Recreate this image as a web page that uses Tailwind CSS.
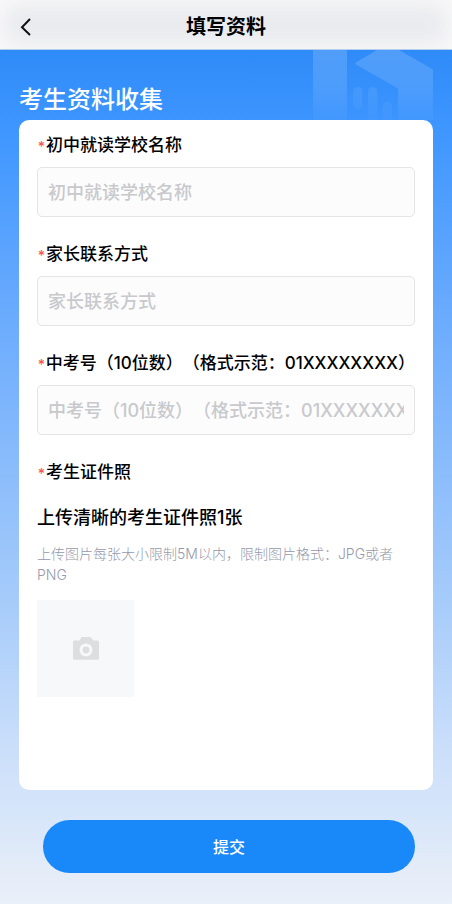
<!DOCTYPE html>
<html lang="zh-CN">
<head>
<meta charset="utf-8">
<meta name="viewport" content="width=device-width, initial-scale=1">
<title>填写资料</title>
<script src="https://cdn.jsdelivr.net/npm/@tailwindcss/browser@4"></script>
</head>
<body class="flex min-h-screen flex-col bg-[#eaf0fa] font-['Inter','Noto_Sans_CJK_SC',sans-serif] text-black [text-spacing-trim:space-all]">
  <header class="grid h-[50px] shrink-0 grid-cols-[52px_1fr_52px] items-center border-b border-[#b4cdec] bg-[#e9eaee] shadow-[inset_0_0_24px_4px_#fafafa]">
    <button type="button" aria-label="返回" class="flex h-full items-center justify-center">
      <svg class="mt-1 h-5 w-5" viewBox="0 0 20 20" fill="none" stroke="#111" stroke-width="2"><path d="M14 2 6 10.200 14 18"/></svg>
    </button>
    <h1 class="pt-1 text-center text-[20px] leading-7 font-bold">填写资料</h1>
  </header>

  <main class="relative flex grow flex-col bg-[linear-gradient(180deg,#2f8bf8_0%,#3e96ff_9%,#70aefd_34%,#a5cbfa_64%,#cfe1fa_84%,#d5e5fa_89%,#e4ecf8_96%,#eaf0fa_100%)] px-[19px] pb-[31px]">
    <svg class="absolute top-0 right-[19px] h-[70px] w-[120px]" viewBox="0 0 120 70" aria-hidden="true">
      <defs>
        <linearGradient id="fade" gradientUnits="userSpaceOnUse" x1="0" y1="0" x2="0" y2="74">
          <stop offset="0" stop-color="#fff" stop-opacity=".16"/>
          <stop offset=".5" stop-color="#fff" stop-opacity=".11"/>
          <stop offset="1" stop-color="#fff" stop-opacity=".02"/>
        </linearGradient>
      </defs>
      <g fill="url(#fade)">
        <path d="M0 0h34v70H0z"/>
        <path d="M64 0h22l34 19.500V70H85V38.500L43 14.500q-1.500-1 0-2z"/>
        <g opacity=".7">
          <rect x="40" y="37" width="9.500" height="22" rx="4.700"/>
          <path d="M55 70V41.700a4.700 4.700 0 0 1 9.400 0V70z"/>
          <path d="M69.500 70V56.700a4.700 4.700 0 0 1 9.400 0V70z"/>
        </g>
      </g>
    </svg>

    <h2 class="relative pt-[34px] pb-1 text-[24px] leading-8 font-medium text-white">考生资料收集</h2>

    <form class="relative flex grow flex-col">
      <div class="flex grow flex-col rounded-[10px] bg-white px-[18px] pt-[13px] pb-[93px]">
        <div class="flex flex-col gap-[25px]">
          <div class="flex flex-col gap-[10px]">
            <label for="school" class="flex items-center text-[17px] leading-6 font-medium"><span class="w-[9px] pt-[3px] text-center text-[14px] leading-none text-[#fa5151]">*</span>初中就读学校名称</label>
            <input id="school" type="text" placeholder="初中就读学校名称" class="h-[50px] w-full rounded-[5px] border border-[#e4e4e6] bg-[#fcfcfc] px-[10px] text-[18px] font-medium placeholder:text-[#c8c9cc]">
          </div>
          <div class="flex flex-col gap-[10px]">
            <label for="contact" class="flex items-center text-[17px] leading-6 font-medium"><span class="w-[9px] pt-[3px] text-center text-[14px] leading-none text-[#fa5151]">*</span>家长联系方式</label>
            <input id="contact" type="text" placeholder="家长联系方式" class="h-[50px] w-full rounded-[5px] border border-[#e4e4e6] bg-[#fcfcfc] px-[10px] text-[18px] font-medium placeholder:text-[#c8c9cc]">
          </div>
          <div class="flex flex-col gap-[10px]">
            <label for="exam" class="flex items-center text-[17px] leading-6 font-medium whitespace-nowrap"><span class="w-[9px] pt-[3px] text-center text-[14px] leading-none text-[#fa5151]">*</span>中考号（10位数）（格式示范：01XXXXXXXX）</label>
            <input id="exam" type="text" placeholder="中考号（10位数）（格式示范：01XXXXXXXX）" class="h-[50px] w-full rounded-[5px] border border-[#e4e4e6] bg-[#fcfcfc] px-[10px] text-[18px] font-medium placeholder:text-[#c8c9cc]">
          </div>
          <label for="photo" class="flex items-center text-[17px] leading-6 font-medium"><span class="w-[9px] pt-[3px] text-center text-[14px] leading-none text-[#fa5151]">*</span>考生证件照</label>
        </div>
        <h3 class="mt-5 text-[18px] leading-7 font-medium">上传清晰的考生证件照1张</h3>
        <p class="mt-[11px] text-[14px] leading-[21px] font-light text-[#9599ab]">上传图片每张大小限制5M以内，限制图片格式：JPG或者PNG</p>
        <label for="photo" class="mt-[15px] flex h-[97px] w-[97px] cursor-pointer items-center justify-center bg-[#f7f8fa]">
          <svg class="h-[23px] w-[26px]" viewBox="0 0 26 23" aria-hidden="true">
            <path fill="#dcdee0" fill-rule="evenodd" d="M9 0h8q1 0 1.500.9L20 3.500h4.500Q26 3.500 26 5v16.300q0 1.500-1.500 1.500h-23Q0 22.800 0 21.300V5q0-1.500 1.500-1.500H6.500L8 .9Q8.300 0 9 0zM13 6.400a6.500 6.500 0 1 0 0 13 6.500 6.500 0 0 0 0-13z"/>
            <circle cx="13" cy="12.900" r="3.400" fill="#dcdee0"/>
          </svg>
          <input id="photo" type="file" accept="image/png,image/jpeg" class="sr-only">
        </label>
      </div>
      <button type="submit" class="mt-[30px] mr-[18px] ml-6 h-[53px] rounded-full bg-[#1989fa] text-[16px] font-medium text-white">提交</button>
    </form>
  </main>
</body>
</html>
